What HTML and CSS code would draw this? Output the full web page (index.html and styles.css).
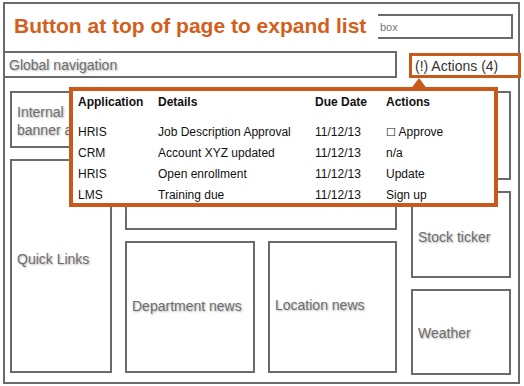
FILE: index.html
```html
<!DOCTYPE html>
<html lang="en">
<head>
    <meta charset="UTF-8">
    <meta name="viewport" content="width=device-width, initial-scale=1.0">
    <title>Intranet Home Wireframe</title>
    <link rel="stylesheet" href="styles.css">
</head>
<body>
    <!-- Page frame -->
    <div class="frame">
        <header class="top">
            <h1 class="note">Button at top of page to expand list</h1>
            <div class="search">Search box</div>
        </header>

        <div class="navrow">
            <nav class="global-nav">Global navigation</nav>
            <button class="actions-btn" type="button">(!) Actions (4)</button>
        </div>

        <div class="content">
            <div class="main">
                <div class="box banner">Internal banner area</div>
                <div class="box quick">Quick Links</div>
                <div class="box feature"></div>
                <div class="box dept">Department news</div>
                <div class="box loc">Location news</div>
            </div>
            <div class="side">
                <div class="box side-top"></div>
                <div class="box ticker">Stock ticker</div>
                <div class="box weather">Weather</div>
            </div>
        </div>

        <!-- Expanded actions list -->
        <div class="popup">
            <div class="row head">
                <span>Application</span><span>Details</span><span>Due Date</span><span>Actions</span>
            </div>
            <div class="row">
                <span>HRIS</span><span>Job Description Approval</span><span>11/12/13</span><span><span class="check">&#9744;</span> Approve</span>
            </div>
            <div class="row">
                <span>CRM</span><span>Account XYZ updated</span><span>11/12/13</span><span>n/a</span>
            </div>
            <div class="row">
                <span>HRIS</span><span>Open enrollment</span><span>11/12/13</span><span>Update</span>
            </div>
            <div class="row">
                <span>LMS</span><span>Training due</span><span>11/12/13</span><span>Sign up</span>
            </div>
        </div>
        <svg class="pointer" width="18" height="12" viewBox="0 0 18 12">
            <polygon points="9,0 18,12 0,12" fill="#c9581b"/>
        </svg>
    </div>
</body>
</html>
```

FILE: styles.css
```css
body {
    margin: 0;
    font-family: "Liberation Sans", Arial, sans-serif;
    background-color: #fff;
    color: #222;
}

.frame {
    position: relative;
    margin: 2px 0 0 3px;
    width: 517px;
    height: 382px;
    border: 2px solid #6a6a6a;
    box-sizing: border-box;
}

.top {
    height: 47px;
    display: flex;
    justify-content: flex-end;
    align-items: flex-start;
    padding-right: 5px;
}

.note {
    position: absolute;
    left: 4px;
    top: 9px;
    margin: 0;
    padding: 0 12px 3px 5px;
    background: #fff;
    color: #d2601c;
    font-size: 21px;
    line-height: 25px;
    font-weight: bold;
    white-space: nowrap;
}

.search {
    margin-top: 10px;
    width: 179px;
    height: 25px;
    border: 2px solid #6a6a6a;
    box-sizing: border-box;
    padding-left: 6px;
    display: flex;
    align-items: center;
    font-size: 11px;
    color: #777;
}

.navrow {
    display: flex;
    align-items: flex-start;
    height: 27px;
}

.global-nav {
    flex-shrink: 0;
    width: 392px;
    height: 27px;
    box-sizing: border-box;
    border: 2px solid #6a6a6a;
    border-left: none;
    padding-left: 4px;
    display: flex;
    align-items: center;
    font-size: 14px;
    color: #6e6e6e;
    text-shadow: 1px 1px 2px rgba(0, 0, 0, 0.3);
}

.actions-btn {
    flex-shrink: 0;
    margin: 2px -3px 0 12px;
    width: 112px;
    height: 25px;
    box-sizing: border-box;
    border: 3px solid #c9581b;
    background: #fff;
    padding: 0 0 0 3px;
    text-align: left;
    font-family: inherit;
    font-size: 14px;
    color: #333;
}

.content {
    display: flex;
    gap: 14px;
    padding: 13px 0 0 5px;
}

.main {
    display: grid;
    grid-template-columns: 102px 130px 129px;
    grid-template-rows: 57px 71px 132px;
    column-gap: 13px;
    row-gap: 11px;
}

.box {
    border: 2px solid #6a6a6a;
    box-sizing: border-box;
    padding: 0 5px;
    display: flex;
    align-items: center;
    font-size: 14px;
    line-height: 18px;
    color: #6e6e6e;
    text-shadow: 1px 1px 2px rgba(0, 0, 0, 0.3);
}

.banner {
    grid-column: 1;
    grid-row: 1;
    padding-top: 3px;
}

.quick {
    grid-column: 1;
    grid-row: 2 / 4;
    padding-bottom: 14px;
}

.feature {
    grid-column: 2 / 4;
    grid-row: 1 / 3;
}

.dept {
    grid-column: 2;
    grid-row: 3;
    padding-bottom: 2px;
}

.loc {
    grid-column: 3;
    grid-row: 3;
    padding-bottom: 4px;
}

.side {
    width: 100px;
    display: flex;
    flex-direction: column;
    gap: 11px;
}

.side-top {
    height: 89px;
}

.ticker {
    height: 87px;
    padding-top: 4px;
}

.weather {
    height: 86px;
    padding-top: 2px;
}

.popup {
    position: absolute;
    left: 64px;
    top: 83px;
    width: 429px;
    box-sizing: border-box;
    border: 4px solid #c9581b;
    background: #fff;
    padding: 4px 0 0 5px;
    font-size: 12px;
    color: #111;
}

/* little arrow joining the button and the list */
.pointer {
    position: absolute;
    left: 405px;
    top: 74px;
    display: block;
}

.row {
    display: grid;
    grid-template-columns: 80px 157px 71px 1fr;
    line-height: 15px;
    white-space: nowrap;
}

.row + .row {
    margin-top: 6px;
}

.head {
    font-weight: bold;
    margin-bottom: 15px;
}

.check {
    font-family: "DejaVu Sans", sans-serif;
    font-size: 11px;
}
```
